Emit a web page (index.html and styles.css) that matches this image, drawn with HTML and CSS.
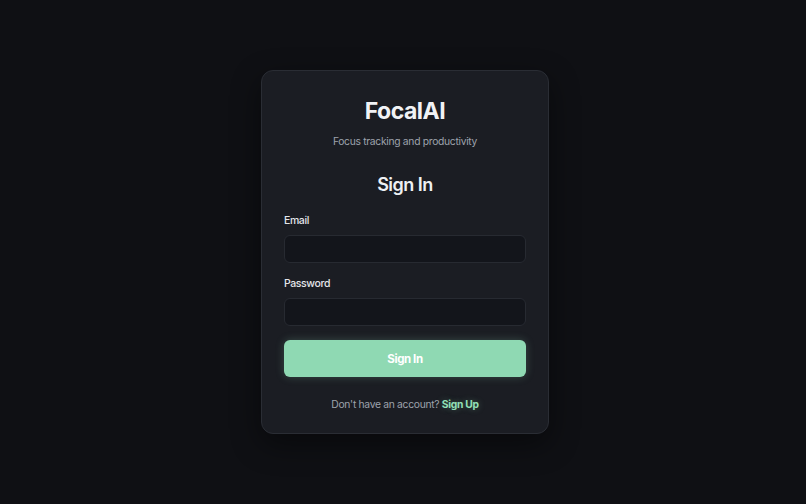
FILE: index.html
```html
<!DOCTYPE html>
<html lang="en">
<head>
<meta charset="utf-8">
<title>FocalAI – Sign In</title>
<link rel="stylesheet" href="styles.css">
</head>
<body>
<main class="page">
  <section class="card">
    <h1 class="brand">FocalAI</h1>
    <p class="tagline">Focus tracking and productivity</p>
    <h2 class="heading">Sign In</h2>
    <form class="form">
      <label class="field">
        <span class="label">Email</span>
        <input class="input" type="email">
      </label>
      <label class="field">
        <span class="label">Password</span>
        <input class="input" type="password">
      </label>
      <button class="btn" type="button">Sign In</button>
    </form>
    <p class="footer">Don't have an account? <a class="link" href="#">Sign Up</a></p>
  </section>
</main>
</body>
</html>
```

FILE: styles.css
```css
* { box-sizing: border-box; }
html, body { margin: 0; height: 100%; }
body {
  background: #0f1014;
  font-family: Inter, "Noto Sans", sans-serif;
  color: #eceef2;
}
.page {
  height: 100%;
  display: flex;
  align-items: center;
  justify-content: center;
  padding-left: 4px;
}
.card {
  width: 288px;
  background: #1b1d23;
  border: 1px solid #2a2d34;
  border-radius: 12px;
  padding: 24px 22px 21px;
  box-shadow: 0 10px 30px rgba(0,0,0,0.45);
  display: flex;
  flex-direction: column;
  align-items: stretch;
}
.brand {
  margin: 0;
  text-align: center;
  font-size: 23px;
  line-height: 32px;
  font-weight: 700;
  letter-spacing: -0.5px;
  color: #f1f2f5;
}
.tagline {
  margin: 6px 0 0;
  text-align: center;
  font-size: 10.3px;
  line-height: 16px;
  letter-spacing: -0.3px;
  color: #9ea3ad;
}
.heading {
  margin: 24px 0 0;
  text-align: center;
  font-size: 18px;
  line-height: 24px;
  font-weight: 600;
  letter-spacing: -0.5px;
  color: #eef0f3;
}
.form {
  margin-top: 17px;
  display: flex;
  flex-direction: column;
}
.field {
  display: flex;
  flex-direction: column;
  gap: 7px;
  margin-bottom: 14px;
}
.label {
  font-size: 10.5px;
  line-height: 14px;
  font-weight: 500;
  letter-spacing: -0.4px;
  color: #e3e5ea;
}
.input {
  height: 28px;
  width: 100%;
  background: #13151b;
  border: 1px solid #272a31;
  border-radius: 6px;
  color: #eceef2;
  font: inherit;
  outline: none;
}
.btn {
  height: 37px;
  border: none;
  border-radius: 6px;
  background: #8fd9b3;
  color: #ffffff;
  font-family: inherit;
  font-size: 11.5px;
  font-weight: 700;
  letter-spacing: -0.4px;
  box-shadow: 0 0 8px rgba(143,217,179,0.25);
}
.footer {
  margin: 19px 0 0;
  text-align: center;
  font-size: 10.3px;
  line-height: 16px;
  letter-spacing: -0.3px;
  color: #9ea3ad;
}
.link {
  color: #93e0b8;
  font-weight: 700;
  text-decoration: none;
  text-shadow: 0 0 6px rgba(143,217,179,0.35);
}
```
